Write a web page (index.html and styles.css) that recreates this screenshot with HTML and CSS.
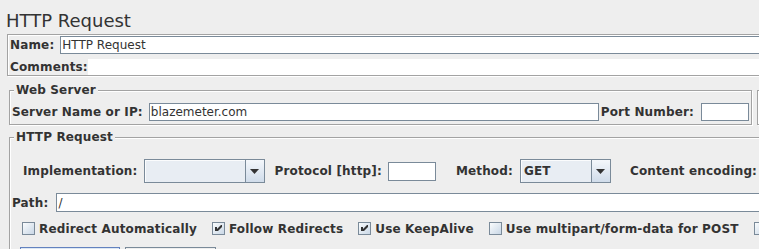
FILE: index.html
```html
<!DOCTYPE html>
<html lang="en">
  <head>
    <meta charset="UTF-8" />
    <meta name="viewport" content="width=device-width, initial-scale=1.0" />
    <title>HTTP Request</title>
    <link rel="stylesheet" href="styles.css">
  </head>
  <body>
    <div class="page">
      <h1 class="title">HTTP Request</h1>

      <div class="name-panel">
        <div class="row name-row">
          <label class="label" for="name">Name:</label>
          <input id="name" class="field grow" type="text" value="HTTP Request" />
        </div>
        <div class="row comments-row">
          <label class="label">Comments:</label>
          <div class="comments grow"></div>
        </div>
      </div>

      <div class="server-line">
        <fieldset class="group web-server">
          <legend>Web Server</legend>
          <div class="row server-row">
            <label class="label server-label">Server Name or IP:</label>
            <input class="field grow" type="text" value="blazemeter.com" />
            <label class="label port-label">Port Number:</label>
            <input class="field port" type="text" />
          </div>
        </fieldset>
        <fieldset class="group timeouts">
          <legend>Timeouts (milliseconds)</legend>
          <div class="row server-row">
            <label class="label">Connect:</label>
            <input class="field port" type="text" />
          </div>
        </fieldset>
      </div>

      <fieldset class="group request">
        <legend>HTTP Request</legend>

        <div class="row impl-row">
          <label class="label impl-label">Implementation:</label>
          <div class="combo impl-combo">
            <span class="combo-value"></span>
            <span class="combo-button">
              <svg width="9" height="5" viewBox="0 0 9 5"><path d="M0 0h9L4.5 5z" fill="#333" /></svg>
            </span>
          </div>
          <label class="label protocol-label">Protocol [http]:</label>
          <input class="field protocol" type="text" />
          <label class="label method-label">Method:</label>
          <div class="combo method-combo">
            <span class="combo-value">GET</span>
            <span class="combo-button">
              <svg width="9" height="5" viewBox="0 0 9 5"><path d="M0 0h9L4.5 5z" fill="#333" /></svg>
            </span>
          </div>
          <label class="label encoding-label">Content encoding:</label>
          <input class="field encoding" type="text" />
        </div>

        <div class="row path-row">
          <label class="label path-label">Path:</label>
          <input class="field grow" type="text" value="/" />
        </div>

        <div class="row options-row">
          <span class="option">
            <span class="check"></span>
            <span class="label">Redirect Automatically</span>
          </span>
          <span class="option">
            <span class="check">
              <svg width="11" height="11" viewBox="0 0 11 11"><polygon points="2,4 4,4 4,6 8,2 9,2 9,4 5,8 2,8" fill="#333" /></svg>
            </span>
            <span class="label">Follow Redirects</span>
          </span>
          <span class="option">
            <span class="check">
              <svg width="11" height="11" viewBox="0 0 11 11"><polygon points="2,4 4,4 4,6 8,2 9,2 9,4 5,8 2,8" fill="#333" /></svg>
            </span>
            <span class="label">Use KeepAlive</span>
          </span>
          <span class="option">
            <span class="check"></span>
            <span class="label">Use multipart/form-data for POST</span>
          </span>
          <span class="option">
            <span class="check"></span>
            <span class="label">Browser-compatible headers</span>
          </span>
        </div>

        <div class="tabs">
          <span class="tab active">Parameters</span>
          <span class="tab">Body Data</span>
        </div>
      </fieldset>
    </div>
  </body>
</html>
```

FILE: styles.css
```css
html,
body {
  margin: 0;
  padding: 0;
  overflow: hidden;
}

body {
  background: #eeeeee;
  color: #333333;
  font: bold 12px "DejaVu Sans", "Liberation Sans", sans-serif;
  letter-spacing: 0.15px;
}

.page {
  width: 1000px;
}

.title {
  margin: 10px 0 2px 6px;
  font-size: 18px;
  font-weight: normal;
  line-height: 22px;
  letter-spacing: 0;
}

.row {
  display: flex;
  align-items: center;
}

.grow {
  flex: 1;
  min-width: 0;
}

.label {
  white-space: nowrap;
  line-height: 14px;
}

.field {
  box-sizing: border-box;
  height: 18px;
  margin: 0;
  padding: 0 1px;
  border: 1px solid #7a8a99;
  border-radius: 0;
  background: #ffffff;
  color: #333333;
  font: normal 12px "DejaVu Sans", sans-serif;
  letter-spacing: 0;
  outline: none;
}

/* name / comments */
.name-panel {
  margin-left: 7px;
  padding-left: 1px;
  border: 1px solid #a3a3a3;
  box-shadow: inset 1px 1px #ffffff, 1px 1px #ffffff;
}
.name-row {
  height: 20px;
}
.name-row .label {
  margin: 0 6px 0 1px;
}
.comments-row {
  height: 16px;
  margin-top: 4px;
}
.comments-row .label {
  margin: 0 0 0 1px;
}
.comments {
  height: 16px;
  background: #ffffff;
}

/* titled groups */
.group {
  margin: 0;
  padding: 0;
  min-inline-size: 0;
  border: 1px solid #a3a3a3;
  box-shadow: inset 1px 1px #ffffff, 1px 1px #ffffff;
}
.group legend {
  margin-left: 4px;
  padding: 0 2px;
  line-height: 14px;
  background: #eeeeee;
}

.server-line {
  display: flex;
  gap: 5px;
  margin: 7px 0 0 9px;
}
.web-server {
  box-sizing: border-box;
  width: 743px;
  padding-top: 3px;
}
.timeouts {
  flex: 1;
  padding-top: 3px;
}
.server-row {
  height: 24px;
  padding: 0 2px;
}
.server-label {
  margin-right: 6px;
}
.port-label {
  margin: 0 7px 0 2px;
}
.port {
  width: 48px;
}
.timeouts .label {
  margin: 0 6px 0 4px;
}

/* http request */
.request {
  margin: 5px 0 0 9px;
}
.request .field {
  height: 19px;
}

.impl-row {
  height: 24px;
  margin-top: 15px;
  padding-left: 13px;
}
.impl-label {
  margin-right: 6px;
}
.protocol-label {
  margin: 0 6px 0 10px;
}
.protocol {
  width: 48px;
}
.method-label {
  margin: 0 7px 0 20px;
}
.encoding-label {
  margin: 0 8px 0 19px;
}
.encoding {
  width: 120px;
}

.combo {
  box-sizing: border-box;
  display: flex;
  height: 24px;
  border: 1px solid #7a8a99;
}
.impl-combo {
  width: 121px;
}
.method-combo {
  width: 91px;
}
.combo-value {
  flex: 1;
  display: flex;
  align-items: center;
  padding-left: 3px;
  background: #e8edf3;
  box-shadow: inset 1px 1px #fbfcfd;
}
.combo-button {
  box-sizing: border-box;
  width: 19px;
  display: flex;
  align-items: center;
  justify-content: center;
  border-left: 1px solid #7a8a99;
  background: linear-gradient(#f4f7fb, #d0dcea);
}
.combo-button svg {
  display: block;
}

.path-row {
  height: 19px;
  margin-top: 10px;
  padding-left: 2px;
}
.path-label {
  margin-right: 8px;
}

.options-row {
  height: 17px;
  margin-top: 8px;
  padding-left: 12px;
}
.option {
  display: flex;
  align-items: center;
  gap: 4px;
  margin-right: 15px;
}
.check {
  box-sizing: border-box;
  width: 13px;
  height: 13px;
  border: 1px solid #7a8a99;
  background: linear-gradient(135deg, #fafcfd, #c9d7e6);
}
.check svg {
  display: block;
}

.tabs {
  display: flex;
  gap: 5px;
  margin: 10px 0 0 10px;
}
.tab {
  padding: 3px 9px;
  border: 1px solid #7a8a99;
  border-bottom: none;
  line-height: 14px;
}
.tab.active {
  border-color: #6382bf;
  background: #dce7f3;
}
```
